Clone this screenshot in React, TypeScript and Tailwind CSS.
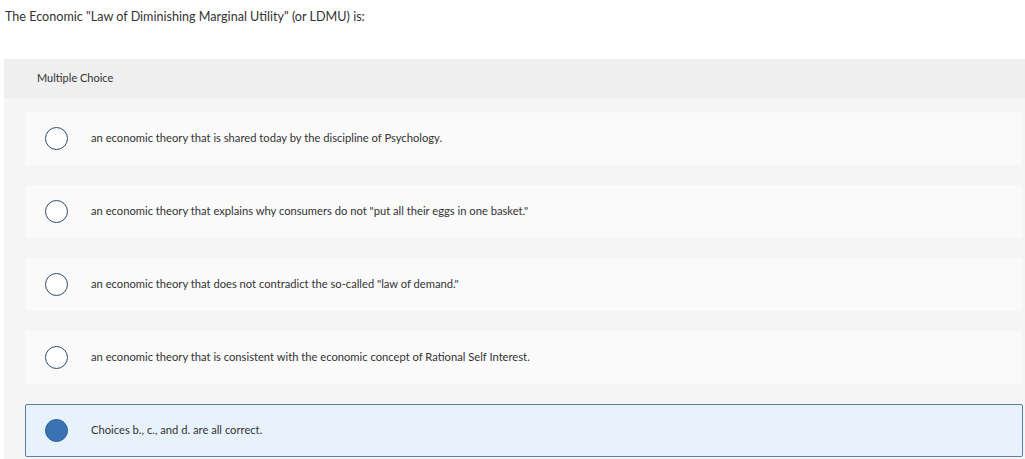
import React from "react";

const OPTIONS = [
  { text: "an economic theory that is shared today by the discipline of Psychology.", selected: false },
  { text: 'an economic theory that explains why consumers do not "put all their eggs in one basket."', selected: false },
  { text: 'an economic theory that does not contradict the so-called "law of demand."', selected: false },
  { text: "an economic theory that is consistent with the economic concept of Rational Self Interest.", selected: false },
  { text: "Choices b., c., and d. are all correct.", selected: true },
];

export default function App() {
  return (
    <div className="w-[1025px] h-[459px] overflow-hidden bg-white text-[#333] font-['Lato','Open_Sans',sans-serif]">
      <p className="pl-[5px] pt-[8px] text-[12.6px] leading-[18px] text-[#333]">
        The Economic "Law of Diminishing Marginal Utility" (or LDMU) is:
      </p>

      <section className="mt-[33px] ml-[4px] bg-[#f5f5f5] pb-[2px]">
        <div className="h-[39px] bg-[#efefef] pl-[33px] flex items-center text-[11px] text-[#333]">
          Multiple Choice
        </div>

        <div className="pt-[14px] pl-[21px] pr-[2px] flex flex-col gap-[20px]">
          {OPTIONS.map((o, i) => (
            <label
              key={i}
              className={
                o.selected
                  ? "h-[53px] flex items-center bg-[#e8f2fc] border border-[#5b7ea6] rounded-[2px]"
                  : "h-[53px] flex items-center bg-[#fafafa] mr-[1px]"
              }
            >
              <span
                className={
                  o.selected
                    ? "ml-[19px] w-[23px] h-[23px] rounded-full bg-[#3a73b4] border border-[#2f5f96] shrink-0"
                    : "ml-[20px] w-[23px] h-[23px] rounded-full border border-[#2f4a66] bg-white shrink-0"
                }
              />
              <span className="ml-[23px] text-[11.2px] text-[#333]">{o.text}</span>
            </label>
          ))}
        </div>
      </section>
    </div>
  );
}
